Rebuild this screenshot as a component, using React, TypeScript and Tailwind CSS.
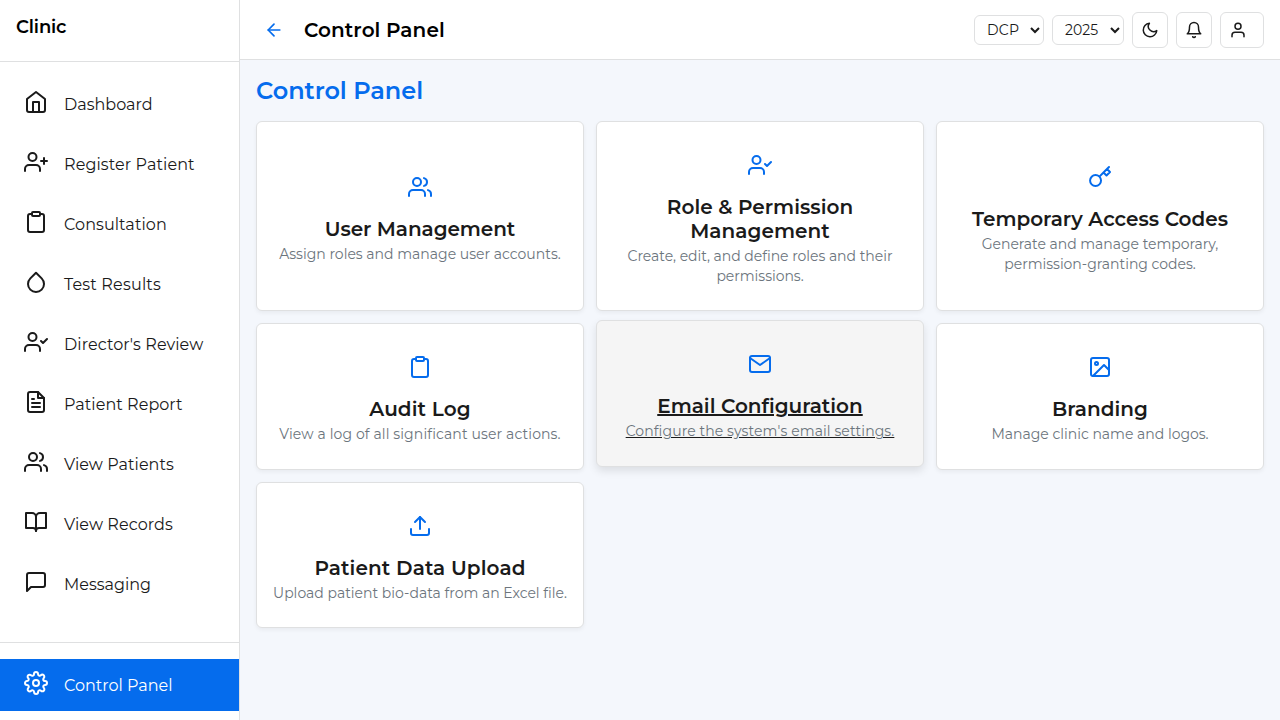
import type { IconType } from 'react-icons'
import {
  FiArrowLeft, FiBell, FiBookOpen, FiClipboard, FiDroplet, FiFileText, FiHome, FiImage, FiKey,
  FiMail, FiMessageSquare, FiMoon, FiSettings, FiUpload, FiUser, FiUserCheck, FiUserPlus, FiUsers,
} from 'react-icons/fi'

type Nav = { label: string; icon: IconType; tracking?: string; active?: boolean }

const navItems: Nav[] = [
  { label: 'Dashboard', icon: FiHome },
  { label: 'Register Patient', icon: FiUserPlus, tracking: 'tracking-[0.09px]' },
  { label: 'Consultation', icon: FiClipboard, tracking: 'tracking-[0.09px]' },
  { label: 'Test Results', icon: FiDroplet, tracking: 'tracking-[0.18px]' },
  { label: "Director's Review", icon: FiUserCheck, tracking: 'tracking-[0.08px]' },
  { label: 'Patient Report', icon: FiFileText, tracking: 'tracking-[0.05px]' },
  { label: 'View Patients', icon: FiUsers, tracking: 'tracking-[0.05px]' },
  { label: 'View Records', icon: FiBookOpen, tracking: 'tracking-[0.08px]' },
  { label: 'Messaging', icon: FiMessageSquare },
]

type CardItem = { title: string; text: string; icon: IconType; titleTracking?: string; textTracking?: string; active?: boolean }

const cards: CardItem[] = [
  { title: 'User Management', text: 'Assign roles and manage user accounts.', icon: FiUsers, titleTracking: 'tracking-[-0.08px]' },
  { title: 'Role & Permission Management', text: 'Create, edit, and define roles and their permissions.', icon: FiUserCheck, titleTracking: 'tracking-[0.04px]', textTracking: 'tracking-[-0.03px]' },
  { title: 'Temporary Access Codes', text: 'Generate and manage temporary, permission-granting codes.', icon: FiKey, textTracking: 'tracking-[-0.03px]' },
  { title: 'Audit Log', text: 'View a log of all significant user actions.', icon: FiClipboard, titleTracking: 'tracking-[0.1px]', textTracking: 'tracking-[0.11px]' },
  { title: 'Email Configuration', text: "Configure the system's email settings.", icon: FiMail, textTracking: 'tracking-[0.09px]', active: true },
  { title: 'Branding', text: 'Manage clinic name and logos.', icon: FiImage, textTracking: 'tracking-[-0.01px]' },
  { title: 'Patient Data Upload', text: 'Upload patient bio-data from an Excel file.', icon: FiUpload, titleTracking: 'tracking-[0.1px]', textTracking: 'tracking-[-0.01px]' },
]

function NavItem({ label, icon: Icon, tracking = '', active }: Nav) {
  return (
    <a className={`flex h-[52px] shrink-0 items-center gap-4 pl-6 ${active ? 'bg-[#056ced] text-white' : 'text-[#1a1a1a]'}`}>
      <Icon size={24} className="mb-1 shrink-0" />
      <span className={`pt-px text-base ${tracking}`}>{label}</span>
    </a>
  )
}

function Card({ title, text, icon: Icon, titleTracking = '', textTracking = '', active }: CardItem) {
  return (
    <a
      className={`flex flex-col items-center justify-center rounded-md border border-[#dfe0e1] px-[15px] pt-[7px] text-center text-[#1a1a1a] ${
        active
          ? '-translate-y-[3px] bg-[#f5f5f5] underline shadow-[0_4px_8px_rgba(0,0,0,0.1)]'
          : 'bg-white shadow-[0_2px_4px_rgba(0,0,0,0.05)]'
      }`}
    >
      <Icon size={24} className="mb-[18px] shrink-0 text-[#056ced]" />
      <h5 className={`mb-[3px] text-xl leading-6 font-semibold ${titleTracking}`}>{title}</h5>
      <p className={`text-sm leading-5 text-[#6c757d] ${textTracking}`}>{text}</p>
    </a>
  )
}

export default function App() {
  return (
    <div className="flex h-screen w-full overflow-hidden bg-[#f4f7fc] font-['Montserrat','Open_Sans',sans-serif]">
      <aside className="flex w-60 shrink-0 flex-col border-r border-[#dfe0e1] bg-white">
        <div className="h-[62px] shrink-0 border-b border-[#dfe0e1] px-4 pt-4 text-lg leading-[22px] font-semibold tracking-[-0.15px] text-black">Clinic</div>
        <nav className="flex flex-1 flex-col gap-2 pt-4">
          {navItems.map((item) => <NavItem key={item.label} {...item} />)}
        </nav>
        <div className="h-[78px] shrink-0 border-t border-[#dfe0e1] pt-4">
          <NavItem label="Control Panel" icon={FiSettings} active />
        </div>
      </aside>
      <div className="flex min-w-0 flex-1 flex-col">
        <header className="flex h-[60px] shrink-0 items-center justify-between border-b border-[#dfe0e1] bg-white px-4">
          <div className="flex items-center gap-5 pl-2">
            <FiArrowLeft size={20} className="text-[#056ced]" />
            <h1 className="text-xl leading-6 font-semibold tracking-[0.08px] text-black">Control Panel</h1>
          </div>
          <div className="flex items-center gap-2 text-[#1a1a1a]">
            <select className="h-[30px] w-[70px] rounded-md border border-[#dfe0e1] bg-white pl-2 text-sm tracking-[0.25px] text-[#1a1a1a]">
              <option>DCP</option>
            </select>
            <select className="h-[30px] w-[72px] rounded-md border border-[#dfe0e1] bg-white pl-2 text-sm text-[#1a1a1a]">
              <option>2025</option>
            </select>
            <button className="flex size-9 items-center justify-center rounded-md border border-[#dfe0e1]"><FiMoon size={18} /></button>
            <button className="flex size-9 items-center justify-center rounded-md border border-[#dfe0e1]"><FiBell size={18} /></button>
            <button className="flex h-9 w-11 items-center rounded-md border border-[#dfe0e1] pl-2"><FiUser size={18} /></button>
          </div>
        </header>
        <main className="px-4 pt-4">
          <h2 className="mb-4 text-2xl leading-[29px] font-semibold tracking-[-0.05px] text-[#056ced]">Control Panel</h2>
          <div className="grid grid-cols-3 grid-rows-[190px_146.6px_146px] gap-3">
            {cards.map((card) => <Card key={card.title} {...card} />)}
          </div>
        </main>
      </div>
    </div>
  )
}
